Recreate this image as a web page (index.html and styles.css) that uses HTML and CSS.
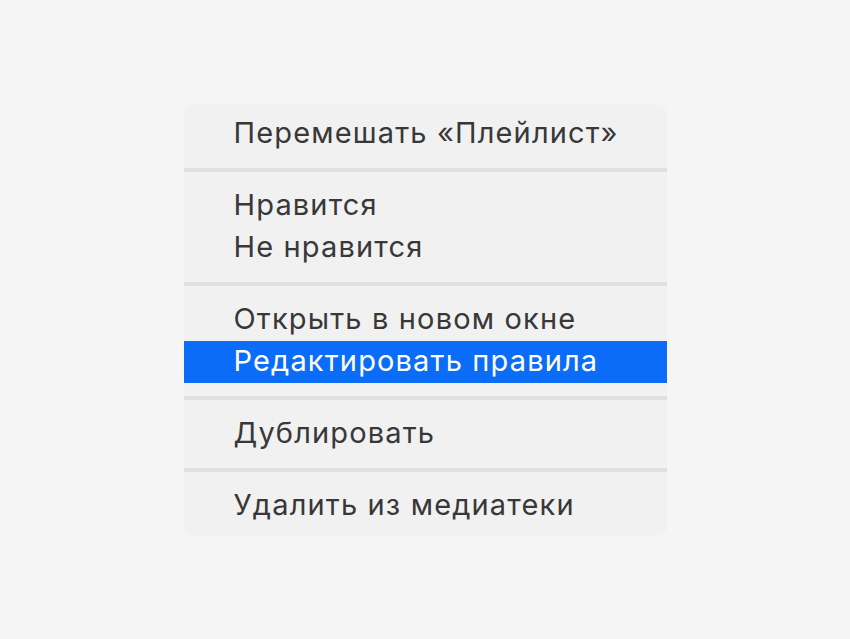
FILE: index.html
```html
<!DOCTYPE html>
<html lang="ru">
<head>
<meta charset="utf-8">
<title>Меню</title>
<link rel="stylesheet" href="styles.css">
</head>
<body>
<div class="stage">
  <div class="menu">
    <div class="item">Перемешать «Плейлист»</div>
    <div class="sep"></div>
    <div class="item">Нравится</div>
    <div class="item">Не нравится</div>
    <div class="sep"></div>
    <div class="item">Открыть в новом окне</div>
    <div class="item active">Редактировать правила</div>
    <div class="sep"></div>
    <div class="item">Дублировать</div>
    <div class="sep"></div>
    <div class="item">Удалить из медиатеки</div>
  </div>
</div>
</body>
</html>
```

FILE: styles.css
```css
html, body {
  margin: 0;
  padding: 0;
  background: #f5f5f5;
}
.stage {
  width: 850px;
  height: 639px;
  display: flex;
  align-items: center;
  justify-content: center;
}
.menu {
  width: 483px;
  box-sizing: border-box;
  padding: 9px 0;
  background: #f1f1f1;
  border-radius: 10px;
  display: flex;
  flex-direction: column;
  font-family: Inter, "Liberation Sans", Arial, sans-serif;
  font-size: 29px;
  letter-spacing: 1.15px;
  color: #383838;
}
.item {
  height: 42px;
  line-height: 40px;
  padding-left: 50px;
  white-space: nowrap;
}
.item.active {
  background: #0a6cf7;
  color: #ffffff;
}
.sep {
  height: 4px;
  margin: 13px 0;
  background: #e0e0e0;
}
```
